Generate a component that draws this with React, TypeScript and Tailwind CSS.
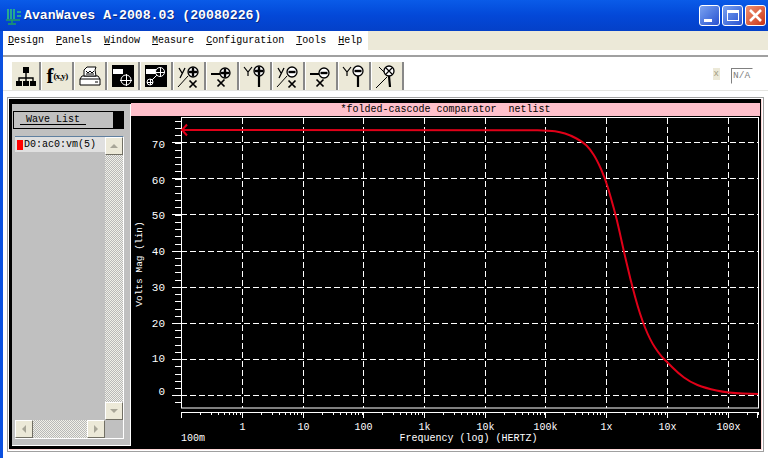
const mono = "font-['Liberation_Mono',monospace]";

const menus = [
  ["D", "esign"],
  ["P", "anels"],
  ["W", "indow"],
  ["M", "easure"],
  ["C", "onfiguration"],
  ["T", "ools"],
  ["H", "elp"],
];

function Lens({ sign, cross }: { sign?: "+" | "-"; cross?: boolean }) {
  return (
    <g stroke="#000" fill="none">
      <circle cx="0" cy="0" r="5" strokeWidth="1.3" fill="#fff" />
      {sign === "+" && <path d="M-4.5 0H4.5M0-4.5V4.5" strokeWidth="2.4" />}
      {sign === "-" && <path d="M-3.5 0H3.5" strokeWidth="2.4" />}
      {cross && <path d="M-3-3L3 3M3-3L-3 3" strokeWidth="1.2" />}
    </g>
  );
}

function XMark({ cx, cy }: { cx: number; cy: number }) {
  return (
    <path
      d={`M${cx - 3.5} ${cy - 3.5}l7 7M${cx + 3.5} ${cy - 3.5}l-7 7`}
      stroke="#000"
      strokeWidth="1.7"
      fill="none"
    />
  );
}

function ToolIcon({ kind }: { kind: number }) {
  if (kind === 0)
    return (
      <svg width="22" height="22" viewBox="0 0 22 22">
        <path d="M11 6v7M4 18v-5h14v5M11 13v5" stroke="#000" strokeWidth="1.4" fill="none" />
        <rect x="8" y="2" width="6" height="6" fill="#000" />
        <rect x="1" y="16" width="6" height="5" fill="#000" />
        <rect x="8" y="16" width="6" height="5" fill="#000" />
        <rect x="15" y="16" width="6" height="5" fill="#000" />
      </svg>
    );
  if (kind === 1)
    return (
      <span className="font-['Liberation_Serif',serif] font-bold text-black leading-none whitespace-nowrap flex items-center">
        <span className="text-[21px]">f</span>
        <span className="text-[9px] tracking-[-0.6px]">(x,y)</span>
      </span>
    );
  if (kind === 2)
    return (
      <svg width="24" height="24" viewBox="0 0 24 24" fill="none" stroke="#000" strokeWidth="1">
        <path d="M2 15h20v6H2zM22 15l-2-3H4l-2 3" fill="#fff" />
        <path d="M6 12V6l3-3h9l-1 3 1 6z" fill="#fff" />
        <path d="M8 7l2 2 2-2 2 2 2-2M8 10h8" />
        <path d="M17 18h3" />
      </svg>
    );
  if (kind === 3)
    return (
      <svg width="22" height="22" viewBox="0 0 22 22">
        <rect x="0" y="0" width="22" height="22" fill="#000" />
        <rect x="1" y="4" width="10" height="5" fill="#fff" />
        <circle cx="14" cy="15" r="5" fill="#000" stroke="#fff" strokeWidth="1" />
        <path d="M8 15.5h12M14.5 9v12" stroke="#fff" strokeWidth="1" />
      </svg>
    );
  if (kind === 4)
    return (
      <svg width="22" height="22" viewBox="0 0 22 22">
        <rect x="0" y="0" width="22" height="22" fill="#000" />
        <rect x="1" y="4" width="10" height="5" fill="#fff" />
        <path d="M6 16l9-9" stroke="#fff" strokeWidth="1" />
        <circle cx="15" cy="7" r="4.5" fill="#000" stroke="#fff" />
        <path d="M10.5 7.5h9M15.5 3v9" stroke="#fff" />
        <circle cx="5" cy="17" r="3" fill="#000" stroke="#fff" />
        <path d="M2 17.5h6M5.5 14v6" stroke="#fff" />
      </svg>
    );
  const sign = kind < 8 ? "+" : kind < 11 ? "-" : undefined;
  const type = kind === 11 ? 3 : (kind - 5) % 3;
  return (
    <svg width="28" height="28" viewBox="0 0 28 28">
      {type === 0 && (
        <>
          <path d="M4 6l3 5M10 6l-5 10" stroke="#000" strokeWidth="1.3" fill="none" />
          <path d="M3 25l10-11" stroke="#000" strokeWidth="1" />
          <XMark cx={18} cy={22} />
          <g transform="translate(18 10)">
            <Lens sign={sign} />
          </g>
        </>
      )}
      {type === 1 && (
        <>
          <path d="M3 12h9" stroke="#000" strokeWidth="2" />
          <XMark cx={13} cy={21} />
          <g transform="translate(17 11)">
            <Lens sign={sign} />
          </g>
        </>
      )}
      {type === 2 && (
        <>
          <path d="M3 5l4 5 4-5M7 10v4" stroke="#000" strokeWidth="1.2" fill="none" />
          <path d="M18 14v11" stroke="#000" strokeWidth="2.2" />
          <g transform="translate(18 9)">
            <Lens sign={sign} />
          </g>
        </>
      )}
      {type === 3 && (
        <>
          <path d="M6 5l6 6M14 15L3 26" stroke="#000" strokeWidth="1" />
          <path d="M16 14l1 11" stroke="#000" strokeWidth="2.2" />
          <g transform="translate(16 9)">
            <Lens cross />
          </g>
        </>
      )}
    </svg>
  );
}

function TitleButton({ kind }: { kind: "min" | "max" | "close" }) {
  const bg =
    kind === "close"
      ? "bg-gradient-to-br from-[#f09070] to-[#c83010]"
      : "bg-gradient-to-br from-[#7ba2f0] to-[#2a50d0]";
  return (
    <div className={`w-[21px] h-[21px] rounded-[3px] border border-white flex items-center justify-center ${bg}`}>
      {kind === "min" && <div className="w-[8px] h-[3px] bg-white mt-[9px] mr-[3px]" />}
      {kind === "max" && <div className="w-[12px] h-[11px] border border-white border-t-[3px]" />}
      {kind === "close" && (
        <svg width="15" height="15" viewBox="0 0 15 15">
          <path d="M2 2l11 11M13 2L2 13" stroke="#fff" strokeWidth="2.6" />
        </svg>
      )}
    </div>
  );
}

function ScrollButton({ dir }: { dir: "up" | "down" | "left" | "right" }) {
  const d = {
    up: "M1 7l4-4 4 4z",
    down: "M1 3l4 4 4-4z",
    left: "M7 1L3 5l4 4z",
    right: "M3 1l4 4-4 4z",
  }[dir];
  return (
    <div className="w-[18px] h-[18px] shrink-0 bg-[#ece9d8] border border-t-white border-l-white border-r-[#716f64] border-b-[#716f64] flex items-center justify-center">
      <svg width="10" height="10" viewBox="0 0 10 10">
        <path d={d} fill="#a8a698" />
      </svg>
    </div>
  );
}

const dither =
  "bg-[repeating-conic-gradient(#b8b8b8_0%_25%,#f0f0e8_0%_50%)] bg-[length:2px_2px]";

function WaveList() {
  return (
    <div className="w-[119px] shrink-0 mt-[1px] mb-[2px] bg-[#c0c0c0] border-r border-b border-white pt-[7px] flex flex-col">
      <div className="ml-[1px] w-[111px] h-[18px] flex">
        <div className={`flex-1 border border-black text-black text-[10px] leading-[15px] pl-[6px] whitespace-pre ${mono}`}>
          <span className="underline underline-offset-2"> Wave List </span>
        </div>
        <div className="w-[10px] bg-black" />
      </div>
      <div className="mt-[7px] ml-[3px] w-[109px] h-[303px] flex flex-col border-t border-r border-b border-t-[#6080a0] border-r-white border-b-white">
        <div className="flex-1 flex min-h-0">
          <div className="flex-1">
            <div className={`h-[15px] bg-[#e0e0e0] flex items-center pl-[2px] text-black text-[10px] ${mono}`}>
              <span className="w-[6px] h-[10px] bg-[#ff0000] mr-[1px]" />
              <span>D0:ac0:vm(5)</span>
            </div>
          </div>
          <div className="w-[18px] flex flex-col">
            <ScrollButton dir="up" />
            <div className={`flex-1 ${dither}`} />
            <ScrollButton dir="down" />
          </div>
        </div>
        <div className="h-[18px] flex">
          <ScrollButton dir="left" />
          <div className={`flex-1 ${dither}`} />
          <ScrollButton dir="right" />
          <div className="w-[18px]" />
        </div>
      </div>
    </div>
  );
}

const yTicks = [
  { v: 70, y: 142.5, label: 144 },
  { v: 60, y: 178.5, label: 180 },
  { v: 50, y: 214.5, label: 215 },
  { v: 40, y: 251.5, label: 251 },
  { v: 30, y: 287.5, label: 287 },
  { v: 20, y: 323.5, label: 323 },
  { v: 10, y: 359.5, label: 358 },
  { v: 0, y: 395.5, label: 391 },
];
const decades = [
  { x: 242.5, label: "1" },
  { x: 303.5, label: "10" },
  { x: 363.5, label: "100" },
  { x: 424.5, label: "1k" },
  { x: 485.5, label: "10k" },
  { x: 545.5, label: "100k" },
  { x: 606.5, label: "1x" },
  { x: 667.5, label: "10x" },
  { x: 728.5, label: "100x" },
];
const minorLogs = [0.301, 0.477, 0.602, 0.699, 0.778, 0.845, 0.903, 0.954];

const curve = [
  [181, 130], [525, 130], [550, 130.5], [560, 132], [570, 135], [583, 142], [590, 149], [597, 160],
  [605, 178], [611, 198], [617, 220], [622, 243], [630, 278], [640, 315], [650, 340],
  [660, 355], [667, 362], [678, 373], [690, 382], [705, 388], [728, 393], [758, 394],
];

// rounds the corners by running quadratics through the midpoints
function smooth(points: number[][]) {
  let d = `M${points[0][0]} ${points[0][1]}`;
  for (let i = 1; i < points.length - 1; i++) {
    const [x, y] = points[i];
    const [nx, ny] = points[i + 1];
    d += `Q${x} ${y} ${(x + nx) / 2} ${(y + ny) / 2}`;
  }
  const last = points[points.length - 1];
  return d + `L${last[0]} ${last[1]}`;
}

// drawn in page coordinates, the viewBox starts at the plot's origin (131,116)
function Plot() {
  const tickFont = "'Liberation Mono', monospace";
  const minorY = Array.from({ length: 42 }, (_, i) => 142.5 + (i - 3) * 7.22).filter((y) => y > 118 && y < 404);
  const minorX: number[] = [];
  [181.5, ...decades.map((d) => d.x)].forEach((x) => minorLogs.forEach((l) => minorX.push(x + l * 60.8)));
  return (
    <svg width="629" height="332" viewBox="131 116 629 332" className="block bg-black">
      <rect x="181.5" y="117.5" width="577" height="290.5" fill="none" stroke="#fff" />
      {yTicks.map((t) => (
        <g key={t.v}>
          <path d={`M181 ${t.y}H758`} stroke="#fff" strokeDasharray="6 3" />
          <path d={`M172 ${t.y}H181`} stroke="#fff" />
          <text x="165" y={t.label + 4} textAnchor="end" fill="#fff" fontSize="11" fontFamily={tickFont}>
            {t.v}
          </text>
        </g>
      ))}
      {minorY.map((y) => (
        <path key={y} d={`M175 ${Math.round(y) + 0.5}H181`} stroke="#fff" />
      ))}
      {decades.map((d) => (
        <g key={d.label}>
          <path d={`M${d.x} 118V408`} stroke="#fff" strokeDasharray="6 3" />
          <path d={`M${d.x} 412V418`} stroke="#fff" />
          <text x={d.x} y="430" textAnchor="middle" fill="#fff" fontSize="10" fontFamily={tickFont}>
            {d.label}
          </text>
        </g>
      ))}
      <path d="M181 412.5H758M181.5 412V418M757.5 412V418" stroke="#fff" />
      {minorX
        .filter((x) => x < 758)
        .map((x) => (
          <path key={x} d={`M${Math.round(x) + 0.5} 412V415`} stroke="#fff" />
        ))}
      <text x="181" y="441" fill="#fff" fontSize="10" fontFamily={tickFont}>
        100m
      </text>
      <text x="468.5" y="441" textAnchor="middle" fill="#fff" fontSize="10" fontFamily={tickFont}>
        Frequency (log) (HERTZ)
      </text>
      <text
        transform="rotate(-90 142 264)"
        x="142"
        y="264"
        textAnchor="middle"
        fill="#fff"
        fontSize="9.5"
        fontFamily={tickFont}
      >
        Volts Mag (lin)
      </text>
      <path d={smooth(curve)} fill="none" stroke="#e00018" strokeWidth="2" />
      <path d="M187 124.5L182 130L187 135.5" fill="none" stroke="#e00018" strokeWidth="2" />
    </svg>
  );
}

export default function App() {
  return (
    <div className="w-[768px] h-[458px] overflow-hidden bg-white flex flex-col">
      <div className="h-[31px] shrink-0 bg-gradient-to-b from-[#0a5be8] via-[#0348d8] to-[#0440c8] flex items-center pl-[5px] pr-[2px]">
        <svg width="18" height="20" viewBox="0 0 18 20" className="shrink-0 mr-[1px]">
          <path d="M3 3v10M6 3v10M9 3v10M12 6h4M12 10h4" stroke="#30c080" strokeWidth="1.6" />
          <path d="M1 14h14M7 14v3M3 18h8" stroke="#20a060" strokeWidth="1.4" />
        </svg>
        <span className={`text-white font-bold text-[13.2px] whitespace-pre [text-shadow:1px_1px_0_#0a2a80] ${mono}`}>
          AvanWaves A-2008.03 (20080226)
        </span>
        <div className="ml-auto flex gap-[2px]">
          <TitleButton kind="min" />
          <TitleButton kind="max" />
          <TitleButton kind="close" />
        </div>
      </div>

      <div className="flex-1 min-h-0 flex border-l-[3px] border-[#0a50e0]">
        <div className="flex-1 min-w-0 flex flex-col">
          <div className="h-[19px] shrink-0 bg-[#ece9d8] flex">
            <div className={`w-[365px] bg-white flex gap-[12px] pl-[5px] items-center text-black text-[10px] ${mono}`}>
              {menus.map(([key, rest]) => (
                <span key={key}>
                  <span className="underline">{key}</span>
                  {rest}
                </span>
              ))}
            </div>
          </div>

          <div className="h-[36px] shrink-0 mt-[5px] border-t-2 border-b border-t-[#a0a0a0] border-b-[#e4e4e0] bg-white flex pl-[8px] pt-[5px]">
            {Array.from({ length: 12 }, (_, i) => (
              <div
                key={i}
                className="w-[33px] first:w-[30px] h-[28px] shrink-0 bg-[#ece9d8] border-l border-l-white border-r-2 border-r-[#888] flex items-center justify-center overflow-hidden"
              >
                <ToolIcon kind={i} />
              </div>
            ))}
            <div className="ml-auto flex items-start gap-[11px] pr-[15px] pt-[6px]">
              <span className={`text-[#a09a80] text-[9px] leading-[12px] bg-[#ece9d8] px-[1px] ${mono}`}>x</span>
              <div className={`w-[22px] h-[16px] border border-t-[#808080] border-l-[#808080] border-r-white border-b-white text-[#808080] text-[9.5px] leading-[14px] pl-[1px] ${mono}`}>
                N/A
              </div>
            </div>
          </div>

          <div className="mt-[6px] ml-[4px] w-[757px] h-[355px] shrink-0 border border-[#a0a0a0] bg-white p-[1px]">
            <div className="h-[351px] bg-black border-r border-b border-[#ffd8d8] pl-[3px] pt-[4px] pr-[1px] pb-[1px] flex">
              <WaveList />
              <div className="flex-1 min-w-0 flex flex-col">
                <div className={`h-[13px] shrink-0 bg-[#ffc0cb] text-black text-[10px] leading-[13px] text-center whitespace-pre ${mono}`}>
                  *folded-cascode comparator  netlist
                </div>
                <Plot />
              </div>
            </div>
          </div>
        </div>
      </div>
    </div>
  );
}
